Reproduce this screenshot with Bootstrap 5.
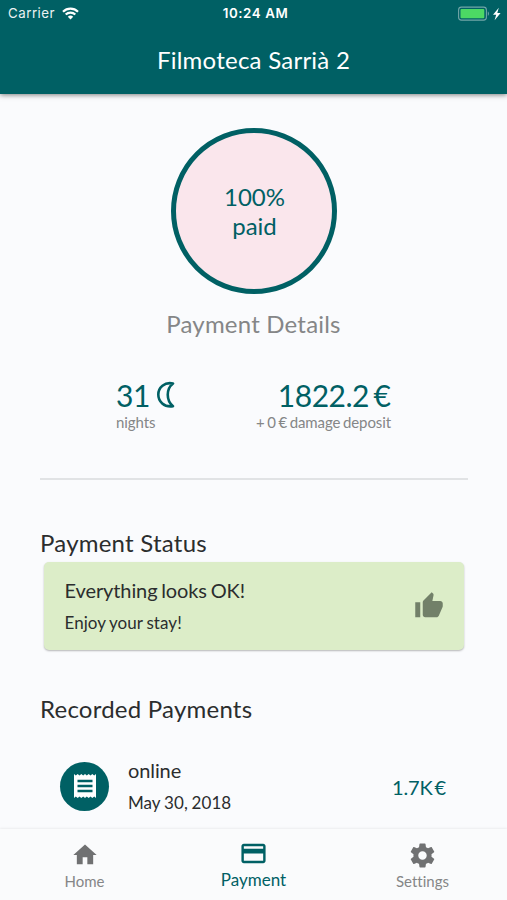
<!DOCTYPE html>
<html lang="en">
<head>
<meta charset="utf-8">
<meta name="viewport" content="width=device-width, initial-scale=1">
<title>Payment Details</title>
<link href="https://cdn.jsdelivr.net/npm/bootstrap@5.3.0/dist/css/bootstrap.min.css" rel="stylesheet">
<style>
:root { --teal: #006064; --grey: #858687; --ink: #2b2d2e; }
body { font-family: Lato, sans-serif; font-variant-ligatures: none; background: #fafbfd; color: var(--ink); height: 900px; overflow: hidden; }
.teal { color: var(--teal); }
.grey { color: var(--grey); }
.app-head { background: var(--teal); height: 94px; box-shadow: 0 1px 5px rgba(0,0,0,.5); }
.status-line { height: 27px; font: 13.3px/27px Inter, sans-serif; padding-left: 8px; padding-right: 5px; }
.status-line .side { width: 80px; }
.carrier { letter-spacing: .5px; opacity: .92; }
.wifi { margin-left: 7px; }
.clock { font-weight: 600; letter-spacing: .6px; padding-left: 1px; }
.app-title { font-size: 24px; line-height: 30px; margin-top: 18px; letter-spacing: .24px; }
.ring { width: 166px; height: 166px; margin-top: 34px; border: 5px solid var(--teal); background: #fae6ec; font-size: 24px; line-height: 29px; padding-left: 2px; }
.details-title { font-size: 24px; line-height: 30px; margin-top: 15px; letter-spacing: .2px; }
.figures { margin: 38px 116px 0 116px; }
.big { font-size: 30px; line-height: 36px; letter-spacing: -.5px; }
.total { word-spacing: -2.5px; margin-right: .5px; }
.moon { margin-left: 6px; }
.cap { font-size: 15px; line-height: 18px; letter-spacing: -.1px; }
.deposit { word-spacing: -1.1px; }
.rule { height: 2px; background: #e1e3e5; margin: 47px 39px 0 40px; }
.sect { font-size: 24px; line-height: 30px; padding-left: 40px; letter-spacing: .23px; }
.status-title { margin-top: 48px; }
.recorded-title { margin-top: 44px; }
.ok-card { margin: 4px 43px 0 44px; height: 88px; background: #dcedc8; border-radius: 5px; padding: 0 20px 0 20.5px; box-shadow: 0 1px 2px rgba(0,0,0,.28); }
.line-a { font-size: 20px; line-height: 28px; letter-spacing: -.1px; word-spacing: -1.3px; }
.line-b { font-size: 17px; line-height: 22px; margin-top: 8px; letter-spacing: .05px; word-spacing: -.6px; }
.texts { margin-top: -3px; }
.pay-row { margin: 31px 61px 0 60px; height: 62px; }
.bubble { width: 49px; height: 49px; background: var(--teal); margin-right: 19px; }
.amount { word-spacing: -2.8px; }
.pay-row .amount { letter-spacing: -.2px; padding-top: 2px; }
.tabs { height: 71px; background: #fafbfc; box-shadow: 0 -1px 2px rgba(0,0,0,.06); }
.tabs .tab { padding-top: 11.5px; font-size: 15px; line-height: 18px; }
.tabs .tab.on { font-size: 17px; padding-top: 10px; }
.tabs svg { margin-bottom: 3.5px; }
.tabs .on svg { margin-bottom: 2.5px; }
.tabs .gear { margin-bottom: 2.5px; }
svg { display: block; }
</style>
<script src="https://cdn.jsdelivr.net/npm/bootstrap@5.3.0/dist/js/bootstrap.bundle.min.js"></script>
</head>
<body class="d-flex flex-column">
<header class="app-head text-white flex-shrink-0">
  <div class="status-line d-flex justify-content-between">
    <div class="side d-flex align-items-center">
      <span class="carrier">Carrier</span>
      <svg class="wifi" width="17" height="13" viewBox="0 0 17 13" fill="none" stroke="#fff" stroke-width="2.2"><path d="M1 4.7a10.7 10.7 0 0 1 15 0M3.7 7.5a6.9 6.9 0 0 1 9.6 0"/><path d="M8.5 12.4 5.8 9.7a3.9 3.9 0 0 1 5.4 0z" fill="#fff" stroke="none"/></svg>
    </div>
    <span class="clock">10:24 AM</span>
    <div class="side d-flex align-items-center justify-content-end">
      <svg width="44" height="16" viewBox="0 0 44 16"><rect x=".6" y="1.1" width="27.8" height="13" rx="2.8" fill="none" stroke="#72a6a8" stroke-width="1.1"/><rect x="2.5" y="2.9" width="23.8" height="9.4" rx="1" fill="#4cd964"/><path d="M29.8 5.5v4.2c1.5-.4 1.5-3.8 0-4.2z" fill="#72a6a8"/><path d="M40.800 1.800 35 8.700h3.200l-1.600 5.500 6-7.200h-3.300z" fill="#fff"/></svg>
    </div>
  </div>
  <h1 class="app-title text-center fw-normal mb-0">Filmoteca Sarrià 2</h1>
</header>

<main class="flex-grow-1 overflow-hidden">
  <div class="ring teal rounded-circle mx-auto d-flex align-items-center justify-content-center text-center">100%<br>paid</div>
  <h2 class="details-title grey fw-normal text-center mb-0">Payment Details</h2>

  <div class="figures d-flex justify-content-between">
    <div>
      <div class="big teal d-flex align-items-center">31
        <svg class="moon" width="20" height="28" viewBox="0 0 20 28" fill="none" stroke="#006064" stroke-width="2.6" stroke-linejoin="round"><path d="M17 2.5C8.500 .8 2.300 6.500 2.300 13.500s5.700 13 14.700 11.700C10 19.500 10 8 17 2.500z"/></svg>
      </div>
      <div class="cap grey">nights</div>
    </div>
    <div class="text-end">
      <div class="big teal total">1822.2 €</div>
      <div class="cap grey deposit">+ 0 € damage deposit</div>
    </div>
  </div>
  <div class="rule"></div>

  <h3 class="sect status-title fw-normal mb-0">Payment Status</h3>
  <div class="ok-card d-flex align-items-center justify-content-between">
    <div class="texts">
      <div class="line-a">Everything looks OK!</div>
      <div class="line-b">Enjoy your stay!</div>
    </div>
    <svg width="30" height="30" viewBox="0 0 24 24" fill="#728069"><path d="M1 21h4V9H1v12zm22-11c0-1.1-.9-2-2-2h-6.31l.95-4.57.03-.32c0-.41-.17-.79-.44-1.06L14.17 1 7.59 7.59C7.22 7.95 7 8.45 7 9v10c0 1.1.9 2 2 2h9c.83 0 1.54-.5 1.84-1.22l3.02-7.05c.09-.23.14-.47.14-.73v-2z"/></svg>
  </div>

  <h3 class="sect recorded-title fw-normal mb-0">Recorded Payments</h3>
  <div class="pay-row d-flex align-items-center">
    <div class="bubble rounded-circle d-flex align-items-center justify-content-center">
      <svg width="24" height="26" viewBox="0 0 24 26"><path fill="#fff" d="M1 1l1.800 1.400L4.700 1l1.800 1.400L8.300 1l1.900 1.400L12 1l1.800 1.400L15.700 1l1.800 1.400L19.300 1l1.900 1.400L23 1v24l-1.800-1.400-1.900 1.400-1.800-1.400-1.800 1.400-1.900-1.400L12 25l-1.800-1.400L8.300 25l-1.800-1.400L4.700 25l-1.900-1.400L1 25z"/><path d="M4.500 8h15M4.500 13h15M4.500 18h15" stroke="#006064" stroke-width="2.400"/></svg>
    </div>
    <div class="texts flex-grow-1">
      <div class="line-a">online</div>
      <div class="line-b">May 30, 2018</div>
    </div>
    <div class="line-a teal amount">1.7K €</div>
  </div>
</main>

<nav class="tabs row g-0 flex-shrink-0">
  <div class="tab col grey d-flex flex-column align-items-center">
    <svg width="28" height="28" viewBox="0 0 24 24" fill="#707172"><path d="M10 20v-6h4v6h5v-8h3L12 3 2 12h3v8z"/></svg>
    <span>Home</span>
  </div>
  <div class="tab on col teal d-flex flex-column align-items-center">
    <svg width="29" height="29" viewBox="0 0 24 24" fill="#006064"><path d="M20 4H4c-1.11 0-1.99.89-1.99 2L2 18c0 1.11.89 2 2 2h16c1.11 0 2-.89 2-2V6c0-1.11-.89-2-2-2zm0 14H4v-6h16v6zm0-10H4V6h16v2z"/></svg>
    <span>Payment</span>
  </div>
  <div class="tab col grey d-flex flex-column align-items-center">
    <svg class="gear" width="29" height="29" viewBox="0 0 24 24" fill="#707172"><path d="M19.43 12.98c.04-.32.07-.64.07-.98s-.03-.66-.07-.98l2.11-1.65c.19-.15.24-.42.12-.64l-2-3.46c-.12-.22-.39-.3-.61-.22l-2.49 1c-.52-.4-1.08-.73-1.69-.98l-.38-2.65C14.46 2.18 14.25 2 14 2h-4c-.25 0-.46.18-.49.42l-.38 2.65c-.61.25-1.17.59-1.69.98l-2.49-1c-.23-.09-.49 0-.61.22l-2 3.46c-.13.22-.07.49.12.64l2.11 1.65c-.04.32-.07.65-.07.98s.03.66.07.98l-2.11 1.65c-.19.15-.24.42-.12.64l2 3.46c.12.22.39.3.61.22l2.49-1c.52.4 1.08.73 1.69.98l.38 2.65c.03.24.24.42.49.42h4c.25 0 .46-.18.49-.42l.38-2.65c.61-.25 1.17-.59 1.69-.98l2.49 1c.23.09.49 0 .61-.22l2-3.46c.12-.22.07-.49-.12-.64l-2.11-1.65zM12 15.5c-1.93 0-3.5-1.57-3.5-3.5s1.57-3.5 3.5-3.5 3.5 1.57 3.5 3.5-1.57 3.5-3.5 3.5z"/></svg>
    <span>Settings</span>
  </div>
</nav>
</body>
</html>
